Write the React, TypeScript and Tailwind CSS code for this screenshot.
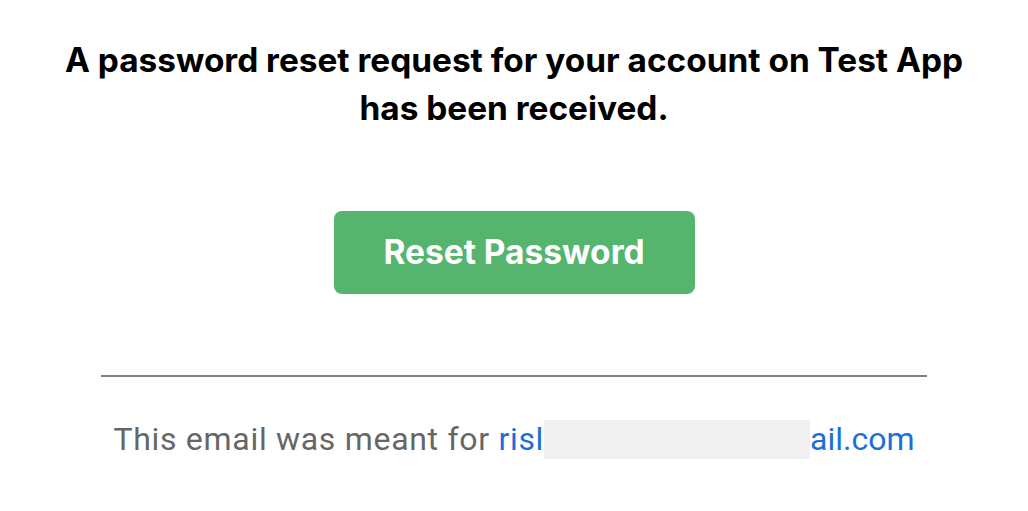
import React from 'react';

export default function App() {
  return (
    <div className="min-h-screen bg-white flex flex-col items-center" style={{ fontFamily: 'Inter, "Noto Sans", sans-serif' }}>
      <h1 className="mt-[36px] text-center text-[33.4px] leading-[48px] font-bold text-black">
        A password reset request for your account on Test App
        <br />
        has been received.
      </h1>

      <a
        href="#"
        className="mt-[79px] w-[361px] h-[83px] rounded-[8px] bg-[#55b56f] flex items-center justify-center text-white text-[33.5px] font-bold"
      >
        Reset Password
      </a>

      <div className="mt-[81px] w-[826px] h-[2px] bg-[#808080]" />

      <p
        className="mt-[38px] flex items-center text-[32px] text-[#666666] font-normal"
        style={{ fontFamily: 'Roboto, "Liberation Sans", sans-serif' }}
      >
        <span className="tracking-[0.7px]">This email was meant for&nbsp;</span>
        <span className="text-[#1a6fd9] tracking-[0.7px]">risl</span>
        <span className="inline-block w-[266px] h-[39px] bg-[#f0f0f0]" />
        <span className="text-[#1a6fd9]">ail.com</span>
      </p>
    </div>
  );
}
